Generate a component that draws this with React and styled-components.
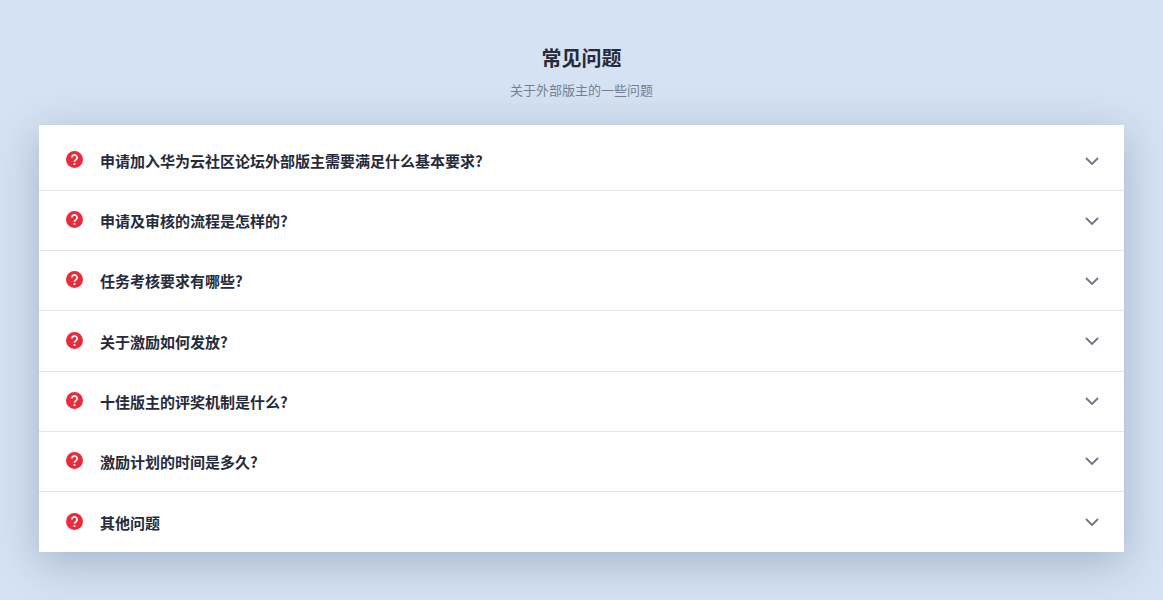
import React from 'react';
import styled, { createGlobalStyle } from 'styled-components';

const GlobalStyle = createGlobalStyle`
  html, body {
    margin: 0;
    padding: 0;
    background: #d5e2f3;
  }
  body {
    font-family: "Noto Sans CJK SC", "Liberation Sans", sans-serif;
  }
`;

const questions = [
  '申请加入华为云社区论坛外部版主需要满足什么基本要求?',
  '申请及审核的流程是怎样的?',
  '任务考核要求有哪些?',
  '关于激励如何发放?',
  '十佳版主的评奖机制是什么?',
  '激励计划的时间是多久?',
  '其他问题',
];

const Page = styled.div`
  height: 600px;
  overflow: hidden;
  box-sizing: border-box;
  padding-top: 44px;
  background: #d5e2f3;
`;

const Title = styled.h2`
  margin: 0;
  font-size: 20px;
  line-height: 28px;
  font-weight: 700;
  color: #252b3a;
  text-align: center;
`;

const Subtitle = styled.p`
  margin: 7px 0 0;
  font-size: 13px;
  line-height: 22px;
  color: #777f8f;
  text-align: center;
`;

const Card = styled.div`
  margin: 24px 39px 0;
  padding-top: 6px;
  background: #fff;
  box-shadow: 0 10px 40px rgba(60, 80, 115, 0.32);
`;

const Row = styled.div`
  height: 60.17px;
  box-sizing: border-box;
  display: flex;
  align-items: center;
  padding: 0 23px 0 27px;
  border-bottom: 1px solid #e3e5e9;
  &:first-child {
    height: 60.17px;
  }
  &:last-child {
    border-bottom: none;
  }
`;

const Mark = styled.svg`
  width: 17px;
  height: 17px;
  flex: none;
  margin-top: -2px;
`;

const Question = styled.span`
  margin-left: 17px;
  flex: 1;
  font-size: 15px;
  font-weight: 700;
  color: #252b3a;
`;

const Chevron = styled.svg`
  width: 18px;
  height: 18px;
  flex: none;
  color: #6f7581;
`;

const QuestionMark = () => (
  <Mark viewBox="0 0 17 17">
    <circle cx="8.5" cy="8.5" r="8.5" fill="#ea2b3c" />
    <path
      d="M5.9 6.5a2.6 2.6 0 1 1 4.1 2.1c-.9.6-1.5 1-1.5 2.1"
      fill="none"
      stroke="#fff"
      strokeWidth="1.7"
    />
    <circle cx="8.5" cy="13" r="1.1" fill="#fff" />
  </Mark>
);

const ChevronDown = () => (
  <Chevron viewBox="0 0 18 18">
    <path
      d="M3 6l6 6 6-6"
      fill="none"
      stroke="currentColor"
      strokeWidth="1.8"
    />
  </Chevron>
);

export default function App() {
  return (
    <>
      <GlobalStyle />
      <Page>
        <Title>常见问题</Title>
        <Subtitle>关于外部版主的一些问题</Subtitle>
        <Card>
          {questions.map((q) => (
            <Row key={q}>
              <QuestionMark />
              <Question>{q}</Question>
              <ChevronDown />
            </Row>
          ))}
        </Card>
      </Page>
    </>
  );
}
